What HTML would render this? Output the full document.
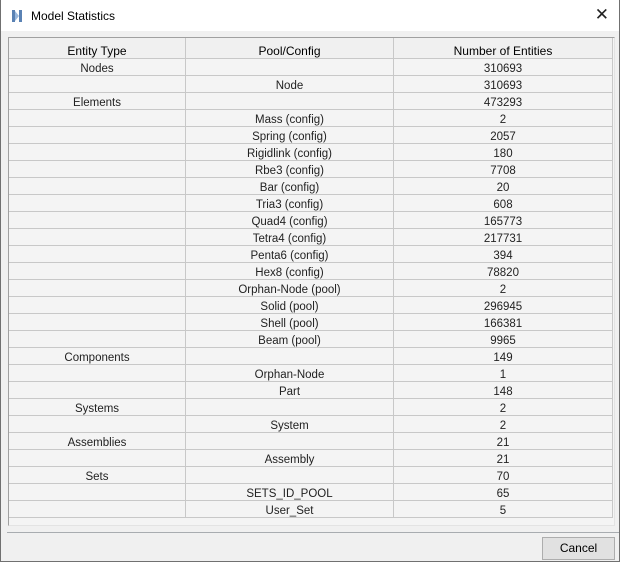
<!DOCTYPE html><html><head><style>
body{margin:0;width:620px;height:563px;overflow:hidden;font-family:"Liberation Sans",sans-serif;font-size:12px;color:#000;}
.win{position:absolute;left:0;top:0;width:618px;height:561px;border:1px solid #707070;border-top:none;background:#f0f0f0;}
.title{position:absolute;left:0;top:0;width:618px;height:31px;background:#fff;}
.title span{position:absolute;left:30px;top:9px;font-size:12px;}
.close{position:absolute;right:10px;top:5px;font-size:17px;color:#222;}
.panel{position:absolute;left:7px;top:37px;width:605px;height:487px;border-left:1px solid #a0a0a0;border-top:1px solid #a0a0a0;border-right:1px solid #e3e3e3;border-bottom:1px solid #e3e3e3;background:#f4f4f4;}
table{border-collapse:collapse;position:absolute;left:0;top:0;width:604px;font-size:11.5px;}
td{height:16px;padding:0;border:1px solid #c8c8c8;border-top:none;text-align:center;color:#222;line-height:12px;vertical-align:bottom;background:#f4f4f4;}
tr:first-child td{color:#000;background:#f0f0f0;font-size:12px;vertical-align:top;}
.h{height:20px;line-height:26px;overflow:hidden;}
td:first-child{border-left:none;width:176px}td:nth-child(2){width:207px}
.sep{position:absolute;left:6px;top:532px;width:612px;height:1px;background:#a8acb0;}
.btn{position:absolute;left:541px;top:537px;width:71px;height:21px;border:1px solid #adadad;background:#e1e1e1;text-align:center;line-height:21px;}
</style></head><body><div class="win">
<div class="title"><svg style="position:absolute;left:10px;top:9px" width="12" height="14"><path d="M1 1h3v12H1zM8 1h3v12H8z" fill="#5a82b4"/><path d="M4 2l4 5-4 5z" fill="#9ab8dc"/></svg><span>Model Statistics</span><div class="close">✕</div></div>
<div class="panel"><table>
<tr><td><div class="h">Entity Type</div></td><td><div class="h">Pool/Config</div></td><td><div class="h">Number of Entities</div></td></tr>
<tr><td>Nodes</td><td></td><td>310693</td></tr>
<tr><td></td><td>Node</td><td>310693</td></tr>
<tr><td>Elements</td><td></td><td>473293</td></tr>
<tr><td></td><td>Mass (config)</td><td>2</td></tr>
<tr><td></td><td>Spring (config)</td><td>2057</td></tr>
<tr><td></td><td>Rigidlink (config)</td><td>180</td></tr>
<tr><td></td><td>Rbe3 (config)</td><td>7708</td></tr>
<tr><td></td><td>Bar (config)</td><td>20</td></tr>
<tr><td></td><td>Tria3 (config)</td><td>608</td></tr>
<tr><td></td><td>Quad4 (config)</td><td>165773</td></tr>
<tr><td></td><td>Tetra4 (config)</td><td>217731</td></tr>
<tr><td></td><td>Penta6 (config)</td><td>394</td></tr>
<tr><td></td><td>Hex8 (config)</td><td>78820</td></tr>
<tr><td></td><td>Orphan-Node (pool)</td><td>2</td></tr>
<tr><td></td><td>Solid (pool)</td><td>296945</td></tr>
<tr><td></td><td>Shell (pool)</td><td>166381</td></tr>
<tr><td></td><td>Beam (pool)</td><td>9965</td></tr>
<tr><td>Components</td><td></td><td>149</td></tr>
<tr><td></td><td>Orphan-Node</td><td>1</td></tr>
<tr><td></td><td>Part</td><td>148</td></tr>
<tr><td>Systems</td><td></td><td>2</td></tr>
<tr><td></td><td>System</td><td>2</td></tr>
<tr><td>Assemblies</td><td></td><td>21</td></tr>
<tr><td></td><td>Assembly</td><td>21</td></tr>
<tr><td>Sets</td><td></td><td>70</td></tr>
<tr><td></td><td>SETS_ID_POOL</td><td>65</td></tr>
<tr><td></td><td>User_Set</td><td>5</td></tr>
</table></div>
<div class="sep"></div>
<div class="btn">Cancel</div>
</div></body></html>
